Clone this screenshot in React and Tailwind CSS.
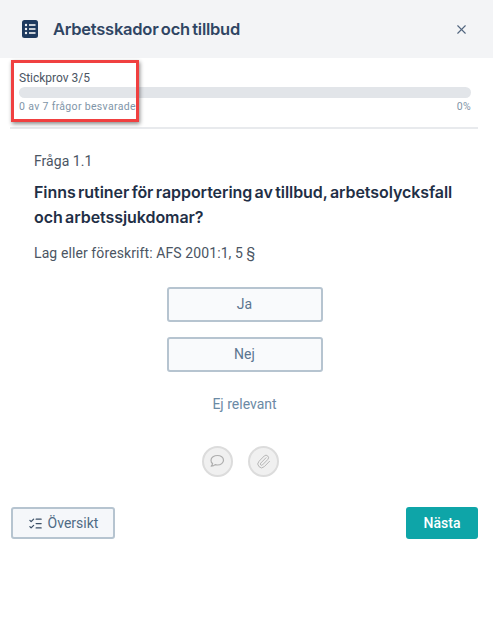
import React from 'react';
import { X, ListChecks, Paperclip } from 'lucide-react';

const App = () => {
  return (
    <div className="relative w-[493px] h-[642px] bg-white overflow-hidden font-['Roboto',sans-serif]">
      {/* Header */}
      <div className="h-[58px] bg-[#f3f4f6] flex items-center pl-[22px] pr-[24px]">
        <svg width="16" height="18" viewBox="0 0 16 18" className="shrink-0">
          <rect width="16" height="18" rx="2.5" fill="#1e3a5f" />
          <circle cx="4" cy="5" r="1.2" fill="#f3f4f6" />
          <circle cx="4" cy="9" r="1.2" fill="#f3f4f6" />
          <circle cx="4" cy="13" r="1.2" fill="#f3f4f6" />
          <rect x="7" y="4.2" width="6.5" height="1.6" fill="#f3f4f6" />
          <rect x="7" y="8.2" width="6.5" height="1.6" fill="#f3f4f6" />
          <rect x="7" y="12.2" width="6.5" height="1.6" fill="#f3f4f6" />
        </svg>
        <h1 className="ml-[15px] font-['Inter',sans-serif] text-[16.5px] font-semibold tracking-[-0.25px] [word-spacing:-1.5px] text-[#2f4563]">
          Arbetsskador och tillbud
        </h1>
        <X size={15} strokeWidth={1.8} className="ml-auto text-[#52667f]" />
      </div>

      {/* Progress */}
      <div className="pl-[19px] pr-[22px] pt-[13px]">
        <p className="text-[12px] leading-[14px] text-[#4b5563]">Stickprov 3/5</p>
        <div className="mt-[2px] h-[11px] rounded-full bg-[#e2e5e9]" />
        <div className="mt-[2px] flex justify-between text-[10.5px] leading-[14px] tracking-[0.33px] text-[#7f95a8]">
          <span>0 av 7 frågor besvarade</span>
          <span>0%</span>
        </div>
      </div>
      <div className="mt-[13px] ml-[10px] mr-[15px] h-[2px] bg-[#e8eaed]" />

      {/* Question */}
      <div className="pl-[34px] pr-[20px] pt-[24px]">
        <p className="text-[14px] leading-[17px] tracking-[0.03px] text-[#4b5563]">Fråga 1.1</p>
        <h2 className="mt-[10px] font-['Inter',sans-serif] text-[16px] leading-[25px] font-semibold tracking-[-0.07px] [word-spacing:-1.5px] text-[#1f2f46]">
          Finns rutiner för rapportering av tillbud, arbetsolycksfall och arbetssjukdomar?
        </h2>
        <p className="mt-[15px] text-[14px] leading-[17px] tracking-[0.1px] text-[#4b5563]">
          Lag eller föreskrift: AFS 2001:1, 5 §
        </p>
      </div>

      {/* Answers */}
      <div className="mt-[25px] pr-[4px] flex flex-col items-center">
        <button className="w-[156px] h-[35px] rounded-[3px] border-2 border-[#b6c4d0] bg-[#f9fafc] text-[14px] text-[#5b7590]">
          Ja
        </button>
        <button className="mt-[15px] w-[156px] h-[35px] rounded-[3px] border-2 border-[#b6c4d0] bg-[#f9fafc] text-[14px] text-[#5b7590]">
          Nej
        </button>
        <p className="mt-[24px] text-[14px] leading-[17px] text-[#6b8aa5]">Ej relevant</p>
        <div className="mt-[33px] mr-[9px] flex gap-[15px]">
          <div className="w-[31px] h-[31px] rounded-full border-2 border-[#dcdcdc] bg-[#f0f0f0] flex items-center justify-center">
            <svg width="16" height="15" viewBox="0 0 16 15" fill="none" stroke="#aeaeae" strokeWidth="1.2" strokeLinejoin="round">
              <path d="M8.5 1.5c3.3 0 6 2 6 4.7s-2.7 4.8-6 4.8c-.8 0-1.6-.1-2.3-.4-1 1-2.4 1.6-4 1.6.7-.7 1.2-1.6 1.400-2.600C2.600 8.900 2 7.600 2 6.200 2 3.500 5.200 1.500 8.500 1.500z" />
            </svg>
          </div>
          <div className="w-[31px] h-[31px] rounded-full border-2 border-[#dcdcdc] bg-[#f0f0f0] flex items-center justify-center">
            <Paperclip size={15} strokeWidth={1.4} className="text-[#aeaeae]" />
          </div>
        </div>
      </div>

      {/* Footer */}
      <div className="mt-[30px] pl-[11px] pr-[15px] flex items-center justify-between">
        <button className="w-[104px] h-[32px] rounded-[3px] border-2 border-[#b6c4d0] bg-[#f5f7fa] flex items-center justify-center gap-[5px] text-[14px] text-[#4f6b85]">
          <ListChecks size={15} strokeWidth={2} className="text-[#3b4f66]" />
          Översikt
        </button>
        <button className="w-[72px] h-[32px] rounded-[3px] bg-[#0ea5a8] text-[14px] font-medium text-white">
          Nästa
        </button>
      </div>

      {/* Red marker over the progress label */}
      <div className="absolute left-[11px] top-[60px] w-[128px] h-[62px] border-[3px] border-[#f04040] shadow-[1px_2px_4px_rgba(0,0,0,0.45)]" />
    </div>
  );
};

export default App;
